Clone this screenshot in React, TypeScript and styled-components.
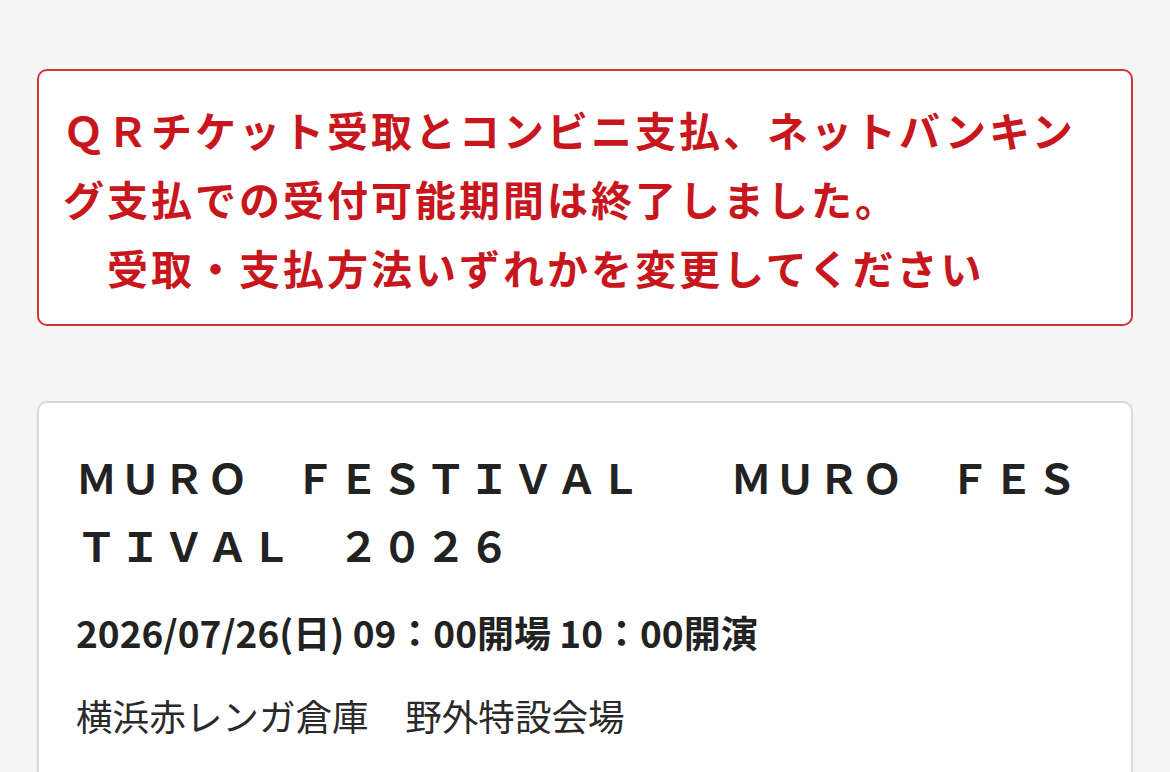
import styled, { createGlobalStyle } from 'styled-components'

const GlobalStyle = createGlobalStyle`
  html, body {
    margin: 0;
    padding: 0;
    background: #f5f5f5;
  }

  body {
    font-family: "Noto Sans CJK JP", "Noto Sans", sans-serif;
    color: #222;
  }
`

const Page = styled.main`
  min-height: 100vh;
  box-sizing: border-box;
  padding: 69px 37px 0;
  display: flex;
  flex-direction: column;
  gap: 75px;
`

const Notice = styled.div`
  background: #fff;
  border: 2.5px solid #d2343a;
  border-radius: 10px;
  padding: 24px 24px 22px;
`

const NoticeText = styled.p`
  margin: 0;
  color: #c8161d;
  font-size: 41px;
  font-weight: 700;
  letter-spacing: 3px;
  line-height: 69px;
`

const EventCard = styled.section`
  background: #fff;
  border: 2px solid #d9d9d9;
  border-radius: 10px;
  padding: 39px 37px 40px;
`

const EventTitle = styled.h2`
  margin: 0;
  font-size: 41px;
  font-weight: 700;
  letter-spacing: 2.65px;
  line-height: 68px;
  color: #222;
`

const EventDate = styled.p`
  margin: 29px 0 0;
  font-size: 37px;
  font-weight: 700;
  line-height: 50px;
  color: #222;
`

const Venue = styled.p`
  margin: 34px 0 0;
  font-size: 36.6px;
  font-weight: 400;
  line-height: 50px;
  color: #2a2a2a;
`

const IDEO_SPACE = '\u3000'

export default function App() {
  return (
    <>
      <GlobalStyle />
      <Page>
        <Notice>
          <NoticeText>
            ＱＲチケット受取とコンビニ支払、ネットバンキング支払での受付可能期間は終了しました。
            <br />
            {IDEO_SPACE}受取・支払方法いずれかを変更してください
          </NoticeText>
        </Notice>

        <EventCard>
          <EventTitle>ＭＵＲＯ　ＦＥＳＴＩＶＡＬ　　ＭＵＲＯ　ＦＥＳＴＩＶＡＬ　２０２６</EventTitle>
          <EventDate>2026/07/26(日) 09：00開場 10：00開演</EventDate>
          <Venue>横浜赤レンガ倉庫　野外特設会場</Venue>
        </EventCard>
      </Page>
    </>
  )
}
